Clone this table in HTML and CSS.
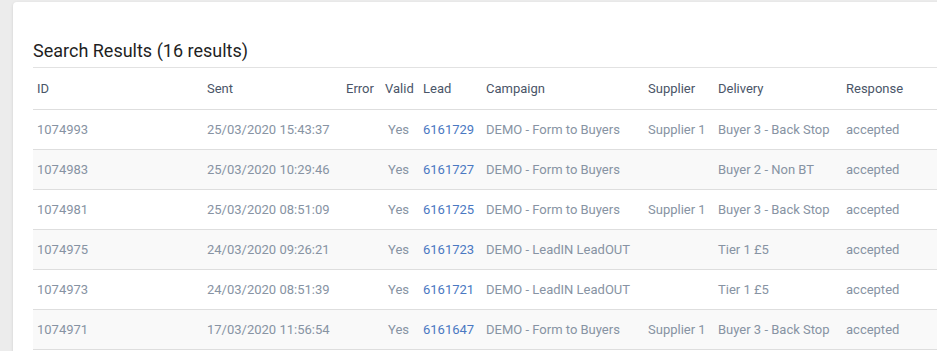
FILE: index.html
```html
<!DOCTYPE html>
<html>
<head>
<meta charset="utf-8">
<link rel="stylesheet" href="styles.css">
</head>
<body>
<div class="page">
  <div class="card">
    <h2 class="title">Search Results (16 results)</h2>
    <table class="results">
      <colgroup>
        <col class="c-id"><col class="c-sent"><col class="c-error"><col class="c-valid"><col class="c-lead"><col class="c-camp"><col class="c-sup"><col class="c-del"><col class="c-resp">
      </colgroup>
      <thead>
        <tr><th>ID</th><th>Sent</th><th>Error</th><th>Valid</th><th>Lead</th><th>Campaign</th><th>Supplier</th><th>Delivery</th><th>Response</th></tr>
      </thead>
      <tbody>
        <tr><td>1074993</td><td>25/03/2020 15:43:37</td><td></td><td class="r">Yes</td><td><a class="lead">6161729</a></td><td>DEMO - Form to Buyers</td><td>Supplier 1</td><td>Buyer 3 - Back Stop</td><td>accepted</td></tr>
        <tr><td>1074983</td><td>25/03/2020 10:29:46</td><td></td><td class="r">Yes</td><td><a class="lead">6161727</a></td><td>DEMO - Form to Buyers</td><td></td><td>Buyer 2 - Non BT</td><td>accepted</td></tr>
        <tr><td>1074981</td><td>25/03/2020 08:51:09</td><td></td><td class="r">Yes</td><td><a class="lead">6161725</a></td><td>DEMO - Form to Buyers</td><td>Supplier 1</td><td>Buyer 3 - Back Stop</td><td>accepted</td></tr>
        <tr><td>1074975</td><td>24/03/2020 09:26:21</td><td></td><td class="r">Yes</td><td><a class="lead">6161723</a></td><td>DEMO - LeadIN LeadOUT</td><td></td><td>Tier 1 £5</td><td>accepted</td></tr>
        <tr><td>1074973</td><td>24/03/2020 08:51:39</td><td></td><td class="r">Yes</td><td><a class="lead">6161721</a></td><td>DEMO - LeadIN LeadOUT</td><td></td><td>Tier 1 £5</td><td>accepted</td></tr>
        <tr><td>1074971</td><td>17/03/2020 11:56:54</td><td></td><td class="r">Yes</td><td><a class="lead">6161647</a></td><td>DEMO - Form to Buyers</td><td>Supplier 1</td><td>Buyer 3 - Back Stop</td><td>accepted</td></tr>
      </tbody>
    </table>
  </div>
</div>
</body>
</html>
```

FILE: styles.css
```css
html, body {
  margin: 0;
  padding: 0;
  background: #ececec;
  font-family: Roboto, "Liberation Sans", sans-serif;
}
.page {
  width: 937px;
  height: 351px;
  overflow: hidden;
  padding: 2px 0 0 13px;
  box-sizing: border-box;
}
.card {
  width: 980px;
  height: 400px;
  background: #fff;
  border-radius: 4px;
  box-shadow: 0 1px 3px rgba(0,0,0,0.12);
  padding: 37px 0 0 20px;
  box-sizing: border-box;
}
.title {
  margin: 0;
  font-size: 18px;
  font-weight: 400;
  color: #1f1f1f;
  line-height: 24px;
  height: 28px;
}
.results {
  border-collapse: collapse;
  table-layout: fixed;
  width: 940px;
  font-size: 13px;
  border-top: 1px solid #e2e2e2;
}
.c-id { width: 170px; }
.c-sent { width: 139px; }
.c-error { width: 39px; }
.c-valid { width: 38px; }
.c-lead { width: 63px; }
.c-camp { width: 162px; }
.c-sup { width: 70px; }
.c-del { width: 128px; }
.c-resp { width: 131px; }
th {
  text-align: left;
  font-weight: 400;
  color: #4a5568;
  height: 41px;
  padding: 0 4px;
  border-bottom: 1px solid #dedede;
  white-space: nowrap;
}
td {
  color: #8793a3;
  height: 39px;
  padding: 0 4px;
  border-bottom: 1px solid #dedede;
  white-space: nowrap;
}
tbody tr:nth-child(even) td {
  background: #f9f9f9;
}
td.r { text-align: right; padding-right: 10px; }
.lead {
  color: #4a78c2;
  text-decoration: none;
}
```
